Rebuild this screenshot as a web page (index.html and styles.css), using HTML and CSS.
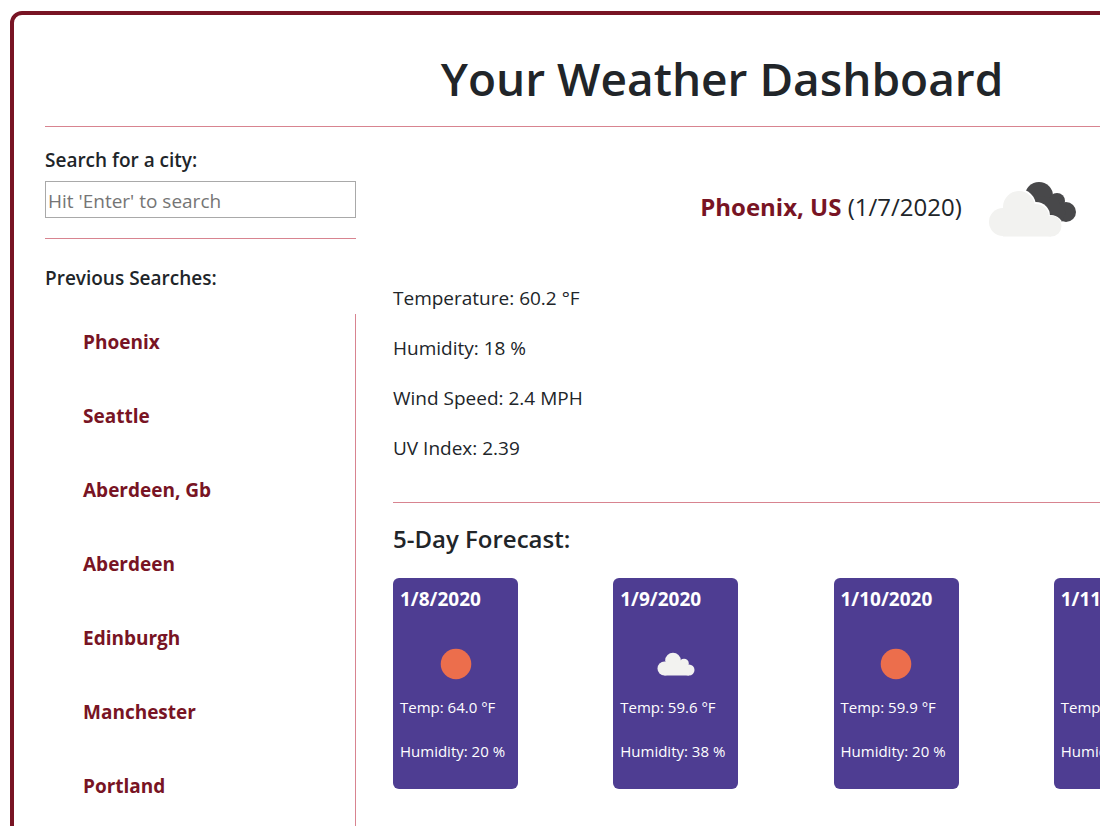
FILE: index.html
```html
<!DOCTYPE html>
<html lang="en">
<head>
<meta charset="utf-8">
<title>Your Weather Dashboard</title>
<link rel="stylesheet" href="styles.css">
</head>
<body>
<div class="dashboard">
  <header class="header">
    <h1 class="title">Your Weather Dashboard</h1>
  </header>
  <div class="columns">
    <aside class="sidebar">
      <form class="search">
        <label class="label" for="city">Search for a city:</label>
        <input class="search-input" id="city" type="text" placeholder="Hit 'Enter' to search">
      </form>
      <h2 class="label">Previous Searches:</h2>
      <ul class="history">
        <li><button class="city" type="button">Phoenix</button></li>
        <li><button class="city" type="button">Seattle</button></li>
        <li><button class="city" type="button">Aberdeen, Gb</button></li>
        <li><button class="city" type="button">Aberdeen</button></li>
        <li><button class="city" type="button">Edinburgh</button></li>
        <li><button class="city" type="button">Manchester</button></li>
        <li><button class="city" type="button">Portland</button></li>
      </ul>
    </aside>
    <main class="main">
      <section class="current">
        <div class="current-head">
          <h2 class="place"><strong class="place-name">Phoenix, US</strong> (1/7/2020)</h2>
          <svg class="current-icon" viewBox="0 0 110 110" aria-hidden="true">
            <g fill="#48484a">
              <circle cx="57" cy="44" r="14"/><circle cx="75" cy="49" r="8"/><circle cx="84" cy="60" r="10"/>
              <path d="M57 44L75 47 84 60 80 70 52 60z"/>
            </g>
            <g fill="#fff">
              <circle cx="37" cy="54" r="17"/><circle cx="54" cy="64" r="14"/><circle cx="69" cy="75" r="12"/>
            </g>
            <g fill="#f2f2f0">
              <circle cx="21" cy="70" r="14"/><circle cx="37" cy="55" r="16"/><circle cx="54" cy="65" r="13"/><circle cx="69" cy="74" r="10.500"/>
              <path d="M21 60H60L69 74V84.500H21z"/>
            </g>
          </svg>
        </div>
        <p class="stat">Temperature: 60.2 °F</p>
        <p class="stat">Humidity: 18 %</p>
        <p class="stat">Wind Speed: 2.4 MPH</p>
        <p class="stat">UV Index: 2.39</p>
      </section>
      <section class="forecast">
        <h2 class="forecast-title">5-Day Forecast:</h2>
        <div class="cards">
          <article class="card">
            <h3 class="date">1/8/2020</h3>
            <svg class="card-icon" viewBox="0 0 50 50" aria-hidden="true"><circle cx="25" cy="25" r="15.300" fill="#ec6e4c"/></svg>
            <p class="reading">Temp: 64.0 °F</p>
            <p class="reading">Humidity: 20 %</p>
          </article>
          <article class="card">
            <h3 class="date">1/9/2020</h3>
            <svg class="card-icon" viewBox="0 0 50 50" aria-hidden="true"><g fill="#f2f2f0"><circle cx="13.500" cy="29.500" r="7"/><circle cx="22" cy="21.500" r="7.800"/><circle cx="33" cy="24.500" r="4.800"/><circle cx="38" cy="31" r="5.500"/><path d="M13.500 24L34 22 38 29V36.500H13.500z"/></g></svg>
            <p class="reading">Temp: 59.6 °F</p>
            <p class="reading">Humidity: 38 %</p>
          </article>
          <article class="card">
            <h3 class="date">1/10/2020</h3>
            <svg class="card-icon" viewBox="0 0 50 50" aria-hidden="true"><circle cx="25" cy="25" r="15.300" fill="#ec6e4c"/></svg>
            <p class="reading">Temp: 59.9 °F</p>
            <p class="reading">Humidity: 20 %</p>
          </article>
          <article class="card">
            <h3 class="date">1/11/2020</h3>
            <svg class="card-icon" viewBox="0 0 50 50" aria-hidden="true"></svg>
            <p class="reading">Temp:</p>
            <p class="reading">Humidity:</p>
          </article>
        </div>
      </section>
    </main>
  </div>
</div>
</body>
</html>
```

FILE: styles.css
```css
* { box-sizing: border-box; }
html { overflow-x: hidden; }
body {
  margin: 0;
  padding: 11px 10px;
  background: #fff;
  color: #212529;
  font-family: "Segoe UI", "Open Sans", "Noto Sans", sans-serif;
  font-size: 19px;
  line-height: 27px;
}
h1, h2, h3, p, ul { margin: 0; padding: 0; }
.dashboard {
  min-width: 1424px;
  min-height: 110vh;
  padding: 31px;
  border: 4px solid #781424;
  border-radius: 12px;
}
.header {
  padding-bottom: 16px;
  border-bottom: 1px solid #d88490;
}
.title {
  font-size: 46px;
  line-height: 64px;
  font-weight: 600;
  text-align: center;
}
.columns {
  display: grid;
  grid-template-columns: 311px 1fr;
  gap: 37px;
  padding-top: 20px;
}
.search {
  display: flex;
  flex-direction: column;
  gap: 7px;
  margin-bottom: 26px;
  padding-bottom: 20px;
  border-bottom: 1px solid #d88490;
}
.label { font-size: 19px; line-height: 27px; font-weight: 600; }
.search-input {
  width: 100%;
  height: 37px;
  padding: 3px 2px 0;
  border: 1px solid #a9a9a9;
  font: inherit;
  color: inherit;
}
.search-input::placeholder { color: #757575; opacity: 1; }
.history {
  margin-top: 22px;
  padding: 14px 0 60px 38px;
  border-right: 1px solid #d88490;
  list-style: none;
  display: grid;
  gap: 46px;
}
.history li { display: flex; }
.city {
  padding: 0;
  border: 0;
  background: none;
  color: #781424;
  font: inherit;
  line-height: 28px;
  font-weight: 700;
}
.current { padding-bottom: 40px; border-bottom: 1px solid #d88490; }
.current-head {
  display: flex;
  align-items: center;
  justify-content: center;
  gap: 20px;
  padding: 5px 0 23px;
}
.place { font-size: 24px; line-height: 32px; font-weight: 500; }
.place-name { color: #781424; font-weight: 700; }
.current-icon { width: 110px; height: 110px; }
.stat { font-weight: 400; }
.stat + .stat { margin-top: 23px; }
.forecast-title { padding: 19px 0 22px; font-size: 24px; line-height: 34px; font-weight: 600; }
.cards {
  display: grid;
  grid-template-columns: repeat(5, 125px);
  justify-content: space-between;
}
.card {
  padding: 8px 7px 27px;
  border-radius: 6px;
  background: #4e3d92;
  color: #fff;
}
.date { font-size: 19px; line-height: 27px; font-weight: 700; }
.card-icon { display: block; width: 50px; height: 50px; margin: 26px auto 7px; }
.reading { font-size: 15px; line-height: 22px; white-space: nowrap; }
.reading + .reading { margin-top: 22px; }
```
